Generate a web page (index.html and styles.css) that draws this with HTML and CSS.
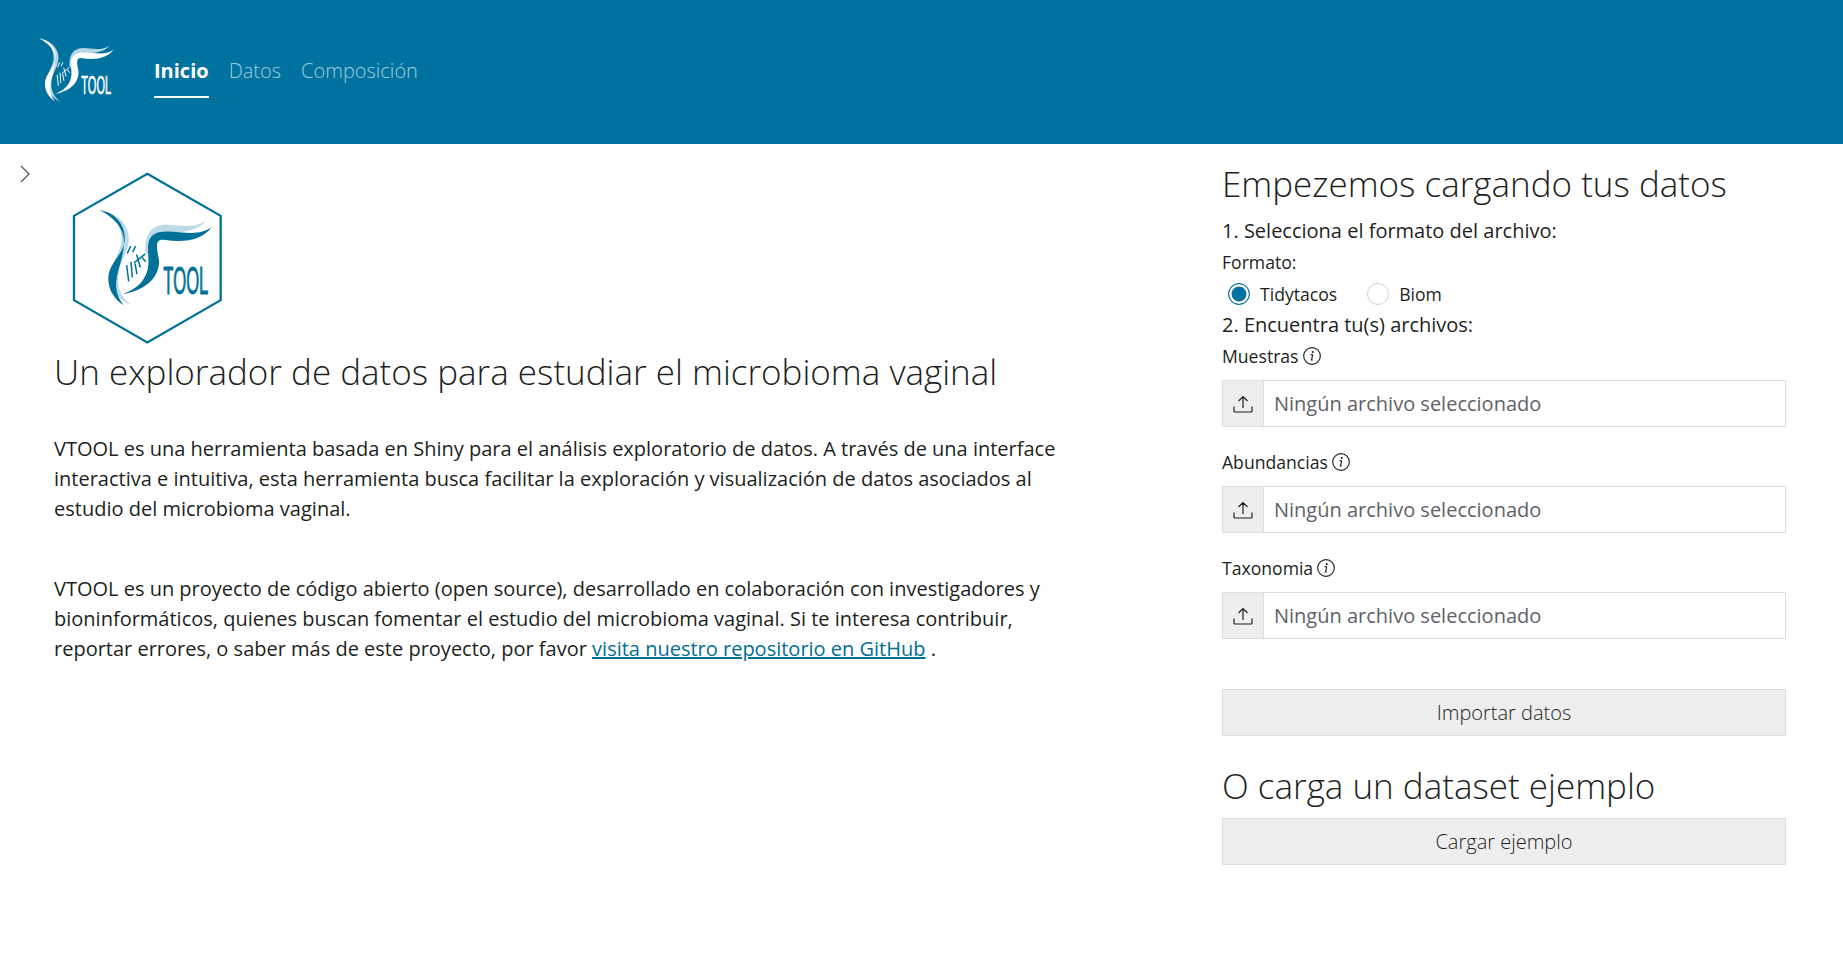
FILE: index.html
```html
<!DOCTYPE html>
<html lang="es">
<head>
<meta charset="utf-8" />
<title>VTOOL</title>
<link rel="stylesheet" href="styles.css">
</head>
<body>

<!-- logo artwork, used in navbar and on the landing column -->
<svg class="defs" width="0" height="0" aria-hidden="true">
  <symbol id="vtool-art" viewBox="298 178 340 294">
    <path class="art-light" d="M318,184 C365,198 390,235 386,275 C382,310 356,340 354,380 C352,415 366,445 394,465 C358,452 336,420 332,385 C330,340 360,312 364,274 C367,236 350,206 318,184 Z"/>
    <path class="art-dark" d="M299,180 C350,186 381,232 373,277 C365,320 325,340 325,385 C325,422 345,448 371,466 C354,442 343,418 351,378 C359,340 380,292 368,250 C358,220 335,198 299,180 Z"/>
    <path class="art-light" d="M436,305 C434,250 455,224 500,223 C540,226 590,236 618,210 C602,240 540,250 490,247 C455,250 447,280 449,320 Z"/>
    <path class="art-dark" d="M368,432 C410,416 441,390 445,345 C448,305 430,260 476,246 C530,236 590,266 636,230 C607,272 550,278 492,269 C462,266 471,295 477,330 C480,386 430,422 368,432 Z"/>
    <g class="art-lines">
      <path d="M392,288 L382,310"/>
      <path d="M407,288 L398,306"/>
      <path d="M436,311 L402,338"/>
      <path d="M410,313 L421,352"/>
      <path d="M427,322 L437,335"/>
      <path d="M393,335 L397,382"/>
      <path d="M405,340 L411,372"/>
      <path d="M380,345 L386,394"/>
    </g>
    <text class="art-text" x="490" y="433" textLength="135" lengthAdjust="spacingAndGlyphs">TOOL</text>
  </symbol>
</svg>

<header class="navbar">
  <svg class="nav-logo"><use href="#vtool-art"/></svg>
  <nav class="nav-links">
    <a class="nav-link active" href="#">Inicio</a>
    <a class="nav-link" href="#">Datos</a>
    <a class="nav-link" href="#">Composición</a>
  </nav>
</header>

<main class="page">
  <button class="side-toggle" aria-label="Abrir panel">
    <svg viewBox="0 0 10 18" width="10" height="18"><path d="M1,1 L9,9 L1,17" fill="none" stroke="#555" stroke-width="1.2"/></svg>
  </button>

  <section class="intro">
    <svg class="hex-logo" viewBox="210 60 465 530">
      <path d="M442,71 L662,197 L662,450 L442,577 L222,450 L222,197 Z" fill="none" stroke="#007299" stroke-width="7"/>
      <use href="#vtool-art" x="298" y="178" width="340" height="294"/>
    </svg>
    <h2 class="intro-title">Un explorador de datos para estudiar el microbioma vaginal</h2>
    <p class="intro-text">VTOOL es una herramienta basada en Shiny para el análisis exploratorio de datos. A través de una interface interactiva e intuitiva, esta herramienta busca facilitar la exploración y visualización de datos asociados al estudio del microbioma vaginal.</p>
    <p class="intro-text">VTOOL es un proyecto de código abierto (open source), desarrollado en colaboración con investigadores y bioninformáticos, quienes buscan fomentar el estudio del microbioma vaginal. Si te interesa contribuir, reportar errores, o saber más de este proyecto, por favor <a href="#">visita nuestro repositorio en GitHub</a> .</p>
  </section>

  <section class="loader">
    <h3 class="loader-title">Empezemos cargando tus datos</h3>
    <div class="step">1. Selecciona el formato del archivo:</div>
    <div class="field-label">Formato:</div>
    <div class="radios">
      <label class="radio"><span class="radio-dot checked"></span>Tidytacos</label>
      <label class="radio"><span class="radio-dot"></span>Biom</label>
    </div>
    <div class="step">2. Encuentra tu(s) archivos:</div>

    <div class="field-label">Muestras
      <svg class="info" viewBox="0 0 16 16"><circle cx="8" cy="8" r="7.4"/><path d="M8.6,6.8 L7.6,11.6 M6.8,11.6 L8.6,11.6 M6.8,6.8 L8.6,6.8"/><circle class="dot" cx="8.7" cy="4.5" r="0.9"/></svg>
    </div>
    <div class="file-input">
      <span class="file-btn"><svg class="upload" viewBox="0 0 20 18"><path d="M10,13 L10,1.5 M5.5,6 L10,1.5 L14.5,6 M1,11.5 L1,16 Q1,17 2,17 L18,17 Q19,17 19,16 L19,11.5"/></svg></span>
      <span class="file-name">Ningún archivo seleccionado</span>
    </div>

    <div class="field-label">Abundancias
      <svg class="info" viewBox="0 0 16 16"><circle cx="8" cy="8" r="7.4"/><path d="M8.6,6.8 L7.6,11.6 M6.8,11.6 L8.6,11.6 M6.8,6.8 L8.6,6.8"/><circle class="dot" cx="8.7" cy="4.5" r="0.9"/></svg>
    </div>
    <div class="file-input">
      <span class="file-btn"><svg class="upload" viewBox="0 0 20 18"><path d="M10,13 L10,1.5 M5.5,6 L10,1.5 L14.5,6 M1,11.5 L1,16 Q1,17 2,17 L18,17 Q19,17 19,16 L19,11.5"/></svg></span>
      <span class="file-name">Ningún archivo seleccionado</span>
    </div>

    <div class="field-label">Taxonomia
      <svg class="info" viewBox="0 0 16 16"><circle cx="8" cy="8" r="7.4"/><path d="M8.6,6.8 L7.6,11.6 M6.8,11.6 L8.6,11.6 M6.8,6.8 L8.6,6.8"/><circle class="dot" cx="8.7" cy="4.5" r="0.9"/></svg>
    </div>
    <div class="file-input">
      <span class="file-btn"><svg class="upload" viewBox="0 0 20 18"><path d="M10,13 L10,1.5 M5.5,6 L10,1.5 L14.5,6 M1,11.5 L1,16 Q1,17 2,17 L18,17 Q19,17 19,16 L19,11.5"/></svg></span>
      <span class="file-name">Ningún archivo seleccionado</span>
    </div>

    <button class="action import">Importar datos</button>
    <h3 class="loader-title second">O carga un dataset ejemplo</h3>
    <button class="action">Cargar ejemplo</button>
  </section>
</main>

</body>
</html>
```

FILE: styles.css
```css
html, body {
    margin: 0;
    background: #fff;
    color: #1d1f21;
    font-family: "Open Sans", sans-serif;
    font-size: 20px;
}
.defs { position: absolute; }

/* logo art */
.art-dark { fill: var(--art-dark); }
.art-light { fill: var(--art-light); }
.art-lines path { fill: none; stroke: var(--art-dark); stroke-width: 4.5; }
.art-text {
    fill: var(--art-dark);
    stroke: var(--art-dark);
    stroke-width: 3;
    font-family: "Liberation Sans", sans-serif;
    font-size: 118px;
}

/* navbar */
.navbar {
    --art-dark: #fff;
    --art-light: #b5d6e4;
    display: flex;
    height: 144px;
    padding-left: 39px;
    background: #0072a0;
}
.nav-logo {
    width: 75px;
    height: 65px;
    margin-top: 38px;
}
.nav-links {
    display: flex;
    gap: 20px;
    margin-left: 40px;
}
.nav-link {
    height: 98px;
    box-sizing: border-box;
    padding-top: 57px;
    color: #a2cbdc;
    font-size: 20px;
    font-weight: 300;
    line-height: 27px;
    text-decoration: none;
    border-bottom: 2px solid transparent;
}
.nav-link.active {
    color: #fff;
    font-weight: 700;
    border-bottom-color: #fff;
}

/* page */
.page {
    --art-dark: #007299;
    --art-light: #bcdae7;
    display: flex;
}
.side-toggle {
    flex: none;
    width: 54px;
    height: 30px;
    margin-top: 16px;
    padding: 0 0 0 20px;
    border: 0;
    background: none;
    text-align: left;
}
.intro {
    flex: none;
    width: 1022px;
    padding-top: 26px;
}
.hex-logo {
    display: block;
    width: 155px;
    height: 177px;
    margin-left: 16px;
}
.intro-title {
    margin: 4px 0 41px;
    font-size: 35px;
    font-weight: 300;
    line-height: 1.2;
}
.intro-text {
    margin: 0 0 50px;
    font-size: 20px;
    line-height: 30px;
}
.intro-text a { color: #006f94; }

/* upload column */
.loader {
    flex: none;
    width: 564px;
    margin-left: 146px;
    padding-top: 19px;
}
.loader-title {
    margin: 0 0 11px;
    font-size: 35px;
    font-weight: 300;
    line-height: 1.2;
}
.loader-title.second { margin: 29px 0 11px; }
.step {
    font-size: 20px;
    line-height: 30px;
}
.step + .field-label { margin-top: 1px; }
.field-label {
    display: flex;
    align-items: center;
    gap: 4px;
    font-size: 17.6px;
    line-height: 30px;
}
.info {
    width: 18px;
    height: 18px;
    fill: none;
    stroke: #1d1f21;
    stroke-width: 1;
}
.info .dot { fill: #1d1f21; stroke: none; }
.radios {
    display: flex;
    gap: 30px;
    padding-left: 6px;
    height: 33px;
    align-items: center;
}
.radio {
    display: flex;
    align-items: center;
    gap: 10px;
    font-size: 17.6px;
}
.radio-dot {
    width: 22px;
    height: 22px;
    box-sizing: border-box;
    border: 1px solid #d5d5d5;
    border-radius: 50%;
}
.radio-dot.checked {
    border-color: #0072a0;
    background: #0072a0;
    box-shadow: inset 0 0 0 2.5px #fff;
}
.file-input {
    display: flex;
    height: 47px;
    margin: 9px 0 20px;
    box-sizing: border-box;
    border: 1px solid #dedede;
}
.file-btn {
    display: flex;
    flex: none;
    align-items: center;
    justify-content: center;
    width: 40px;
    background: #eee;
    border-right: 1px solid #dedede;
}
.upload {
    width: 20px;
    height: 18px;
    fill: none;
    stroke: #1d1f21;
    stroke-width: 1.2;
}
.file-name {
    align-self: center;
    padding-left: 10px;
    color: #5e6266;
    font-size: 20px;
}
.action {
    display: block;
    width: 100%;
    height: 47px;
    padding: 0;
    border: 1px solid #dedede;
    background: #eee;
    color: #1d1f21;
    font-family: inherit;
    font-size: 20px;
    font-weight: 300;
}
.action.import { margin-top: 50px; }
```
